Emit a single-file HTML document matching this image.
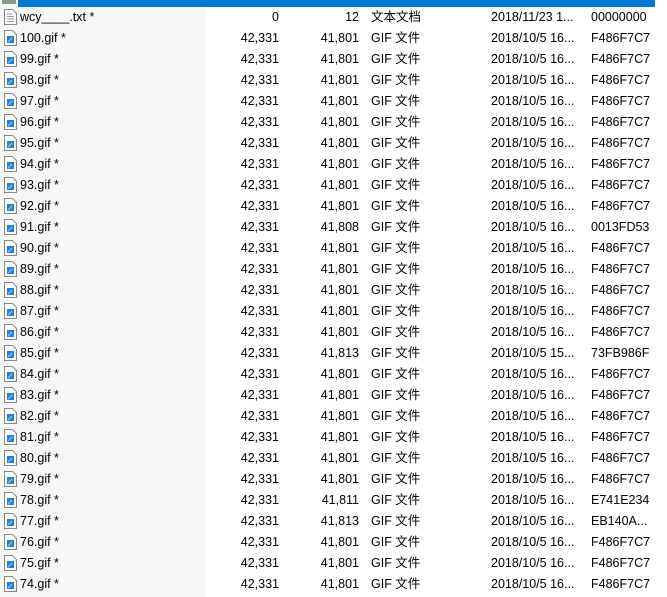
<!DOCTYPE html>
<html><head><meta charset="utf-8"><style>
body{margin:0;width:667px;height:597px;overflow:hidden;background:#fff;font-family:"Liberation Sans","Noto Sans CJK SC",sans-serif;font-size:12.5px;color:#000;position:relative}
.side{position:absolute;left:0;top:0;width:205px;height:597px;background:#f7f7f7}
.hdr{position:absolute;left:18px;top:0;width:637px;height:7px;background:#0078d7}
.hdr0{position:absolute;left:2px;top:0;width:14px;height:4px;background:#8a9a8a}
.r{position:absolute;left:0;width:667px;height:21px;line-height:21px;white-space:nowrap}
.r span{position:absolute;top:0}
.n{left:20px}.s{right:388px}.p{right:308px}.t{left:371px}.d{left:491px}.c{left:591px}
.ic{position:absolute;left:4px;top:2px}
</style></head><body>
<div class="side"></div><div class="hdr0"></div><div class="hdr"></div>
<div id="rows"></div>
<script>
var rows=[["wcy____.txt *","0","12","文本文档","2018/11/23 1...","00000000",1]];
var pk={91:["41,808","0013FD53"],85:["41,813","73FB986F"],78:["41,811","E741E234"],77:["41,813","EB140A..."]};
for(var i=100;i>=74;i--){var p=pk[i]||["41,801","F486F7C7"];rows.push([i+".gif *","42,331",p[0],"GIF 文件",i==85?"2018/10/5 15...":"2018/10/5 16...",p[1],0]);}
var h="";
rows.forEach(function(r,k){
var top=7+k*21;
var icon=r[6]?'<svg class="ic" width="13" height="16"><path d="M0.5 0.5H8.5L12.5 4.5V15.5H0.5Z" fill="#fff" stroke="#888"/><path d="M3 5h5M3 7.5h7M3 10h7M3 12.5h7" stroke="#999"/></svg>'
:'<svg class="ic" width="13" height="16"><path d="M0.5 0.5H8.5L12.5 4.5V15.5H0.5Z" fill="#fff" stroke="#888"/><rect x="3" y="6" width="7" height="7" fill="#2a7fd8"/><path d="M4 12L8 8" stroke="#9fd0ff"/></svg>';
h+='<div class="r" style="top:'+top+'px">'+icon+'<span class="n">'+r[0]+'</span><span class="s">'+r[1]+'</span><span class="p">'+r[2]+'</span><span class="t">'+r[3]+'</span><span class="d">'+r[4]+'</span><span class="c">'+r[5]+'</span></div>';
});
document.getElementById("rows").innerHTML=h;
</script>
</body></html>
